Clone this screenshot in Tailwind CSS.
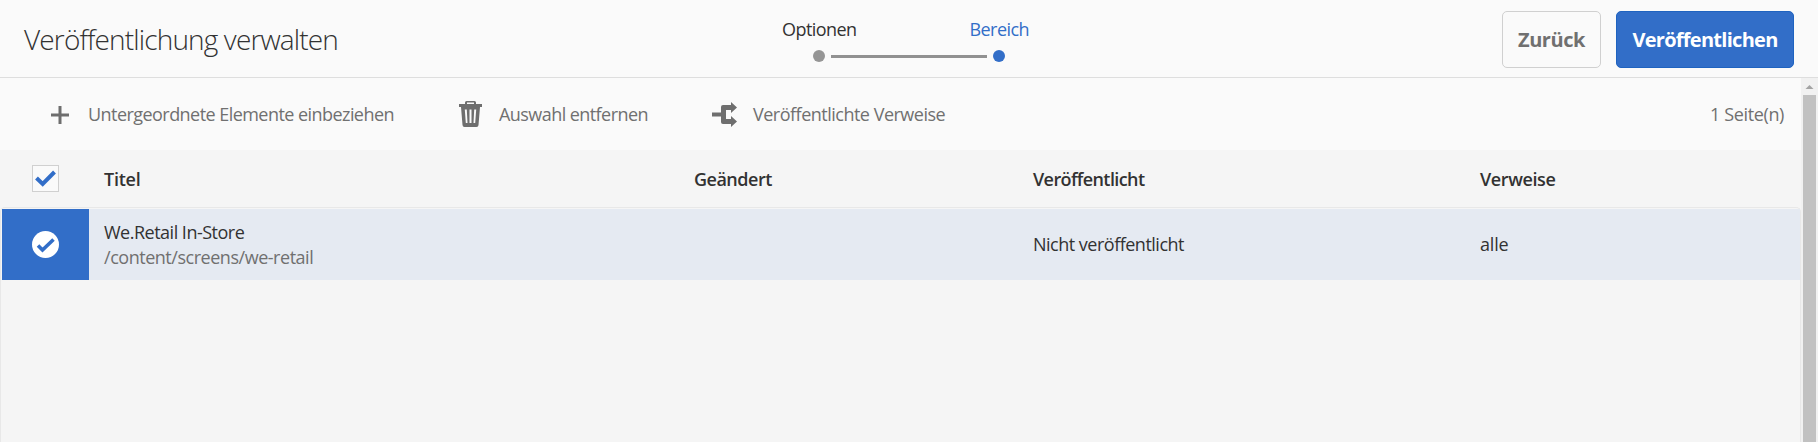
<!DOCTYPE html>
<html lang="de">
<head>
<meta charset="utf-8">
<title>Veröffentlichung verwalten</title>
<script src="https://cdn.jsdelivr.net/npm/@tailwindcss/browser@4"></script>
</head>
<body class="h-[442px] w-[1818px] overflow-hidden bg-[#f5f5f5] font-['Open_Sans',sans-serif] text-[18px] leading-[25px] text-[#323232]">
<div class="flex h-full flex-col">
  <header class="grid h-[78px] shrink-0 grid-cols-[780px_1fr_auto] border-b border-[#dedede] bg-[#fafafa]">
    <h1 class="pt-[19px] pl-[24px] text-[28px] leading-[40px] font-light tracking-[-0.85px]">Veröffentlichung verwalten</h1>
    <div class="pt-[17px]">
      <div class="flex w-[249px] justify-between pl-[2px] tracking-[-0.55px]"><span>Optionen</span><span class="text-[#326ec8]">Bereich</span></div>
      <div class="mt-2 ml-[33px] flex items-center gap-[6px]">
        <span class="size-3 rounded-full bg-[#959595]"></span>
        <span class="h-[3px] w-[156px] bg-[#919191]"></span>
        <span class="size-3 rounded-full bg-[#326ec8]"></span>
      </div>
    </div>
    <div class="flex gap-[15px] pt-[11px] pr-6 text-[20px] font-bold">
      <button class="h-[57px] w-[99px] rounded-[5px] border border-[#d0d0d0] pb-px tracking-[-0.45px] text-[#707070]">Zurück</button>
      <button class="h-[57px] w-[178px] rounded-[5px] border border-[#1f63c0] bg-[#326ec8] pb-px tracking-[-0.72px] text-white">Veröffentlichen</button>
    </div>
  </header>
  <div class="flex min-h-0 flex-1">
    <main class="flex w-[1801px] flex-col">
      <div class="flex h-[72px] shrink-0 items-center bg-[#fafafa] pt-[2px] pr-[17px] pl-[51px] text-[#707070]">
        <svg class="size-[18px]" viewBox="0 0 18 18" fill="#6e6e6e"><path d="M7.500 0h3v7.500H18v3h-7.500V18h-3v-7.500H0v-3h7.500z"/></svg>
        <span class="ml-[19px] w-[371px] pb-px tracking-[-0.55px]">Untergeordnete Elemente einbeziehen</span>
        <svg class="mb-[2px] h-[26px] w-[23px]" viewBox="0 0 23 26" fill="#6e6e6e"><path fill-rule="evenodd" d="M0 3h6V1.500Q6 0 7.500 0h8Q17 0 17 1.500V3h6v3h-2l-1.500 18q-.1 2-2 2h-12q-1.900 0-2-2L2 6H0zM8 3h7V1.500H8zM5.800 8.500l1 13.500h1.700l-.7-13.500zm4.700 0V22h2V8.500zm4.700 0L14.500 22h1.700l1-13.500z"/></svg>
        <span class="ml-[17px] w-[213px] pb-px tracking-[-0.56px]">Auswahl entfernen</span>
        <svg class="mb-[2px] h-[25px] w-[25px]" viewBox="0 0 25 25" fill="#6e6e6e"><path d="M0 10.500h9V5q0-2 2-2h8V0l6 5.500-6 5.500V8h-5v9h5v-3l6 5.500-6 5.500v-3h-8q-2 0-2-2v-5.500H0z"/></svg>
        <span class="ml-[16px] pb-px tracking-[-0.5px]">Veröffentlichte Verweise</span>
        <span class="ml-auto pb-px tracking-[-0.37px]">1 Seite(n)</span>
      </div>
      <div class="grid h-[57px] shrink-0 grid-cols-[104px_590px_339px_447px_1fr] items-center pt-px font-semibold">
        <span class="mb-[2px] ml-8 flex size-[27px] items-center justify-center border border-[#d0d0d0] bg-[#fafafa]">
          <svg class="h-[17px] w-[21px]" viewBox="0 0 21 17" fill="none" stroke="#326ec8" stroke-width="4"><path d="M1.500 8l6.200 6L19.500 2"/></svg>
        </span>
        <span class="tracking-[-0.25px]">Titel</span><span class="tracking-[-0.5px]">Geändert</span><span class="tracking-[-0.6px]">Veröffentlicht</span><span class="tracking-[-0.4px]">Verweise</span>
      </div>
      <section class="flex-1 rounded-t-[5px] border border-b-0 border-[#e8e8e8] pt-px pl-px">
        <div class="grid h-[71px] grid-cols-[87px_15px_929px_447px_1fr] items-center bg-[#e5eaf2]">
          <span class="flex h-full items-center bg-[#326ec8] pl-[30px]">
            <svg class="size-[27px]" viewBox="0 0 27 27"><circle cx="13.500" cy="13.500" r="13.500" fill="#fff"/><path d="M6 14.500l4.500 4.500L21.500 8.500" fill="none" stroke="#326ec8" stroke-width="3.600"/></svg>
          </span>
          <span></span>
          <span><span class="block tracking-[-0.5px]">We.Retail In-Store</span><span class="block tracking-[-0.47px] text-[#707070]">/content/screens/we-retail</span></span>
          <span class="tracking-[-0.5px]">Nicht veröffentlicht</span>
          <span class="tracking-[-0.2px]">alle</span>
        </div>
      </section>
    </main>
    <div class="flex w-[17px] flex-col items-center bg-[#f1f1f1]">
      <svg class="h-[17px] w-[17px]" viewBox="0 0 17 17" fill="#a3a3a3"><path d="M8.500 7l4 4h-8z"/></svg>
      <div class="w-[13px] flex-1 bg-[#c1c1c1]"></div>
    </div>
  </div>
</div>
</body>
</html>
